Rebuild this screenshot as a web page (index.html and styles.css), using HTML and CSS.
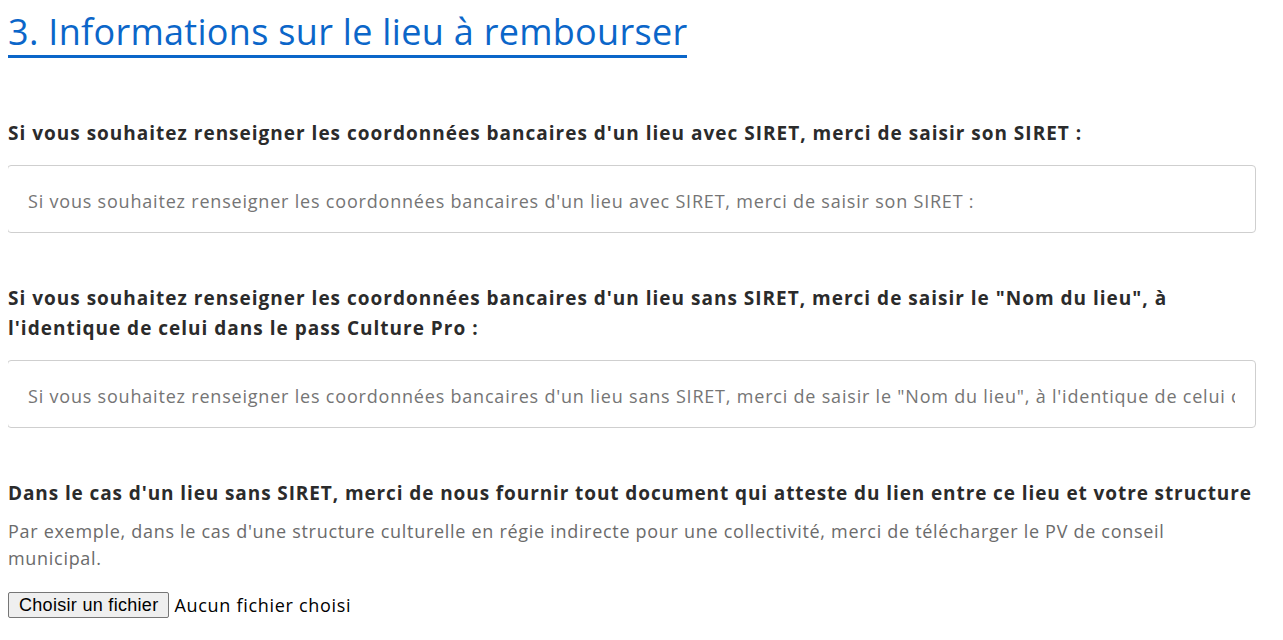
FILE: index.html
```html
<!DOCTYPE html>
<html lang="fr">
<head>
    <meta charset="utf-8">
    <link rel="stylesheet" href="styles.css">
</head>
<body>
    <div class="venue-form">
        <h1 class="venue-title">3. Informations sur le lieu à rembourser</h1>

        <div class="venue-field">
            <label class="venue-label" for="siret">Si vous souhaitez renseigner les coordonnées bancaires d'un lieu avec SIRET, merci de saisir son SIRET :</label>
            <input class="venue-input" id="siret" type="text" placeholder="Si vous souhaitez renseigner les coordonnées bancaires d'un lieu avec SIRET, merci de saisir son SIRET :">
        </div>

        <div class="venue-field">
            <label class="venue-label" for="venueName">Si vous souhaitez renseigner les coordonnées bancaires d'un lieu sans SIRET, merci de saisir le "Nom du lieu", à l'identique de celui dans le pass Culture Pro :</label>
            <input class="venue-input" id="venueName" type="text" placeholder="Si vous souhaitez renseigner les coordonnées bancaires d'un lieu sans SIRET, merci de saisir le &quot;Nom du lieu&quot;, à l'identique de celui dans le pass Culture Pro :">
        </div>

        <div class="venue-field venue-upload">
            <p class="venue-label venue-label-single">Dans le cas d'un lieu sans SIRET, merci de nous fournir tout document qui atteste du lien entre ce lieu et votre structure</p>
            <p class="venue-help">Par exemple, dans le cas d'une structure culturelle en régie indirecte pour une collectivité, merci de télécharger le PV de conseil municipal.</p>
            <div class="file-row">
                <button type="button" class="file-button">Choisir un fichier</button>
                <span class="file-name">Aucun fichier choisi</span>
            </div>
        </div>
    </div>
</body>
</html>
```

FILE: styles.css
```css
* {
    box-sizing: border-box;
}

body {
    margin: 8px;
    font-family: "Open Sans", Arial, sans-serif;
    color: #2b2b2b;
    background: #fff;
}

.venue-form {
    width: 1249px;
    margin-left: -1px;
}

.venue-title {
    display: inline-block;
    margin: 4px 0 0 0;
    padding: 0 0 3px 1px;
    font-size: 36px;
    font-weight: 400;
    line-height: 40px;
    letter-spacing: 0.3px;
    color: #0b66c9;
    border-bottom: 3px solid #0b66c9;
}

.venue-field {
    margin-top: 60px;
}

.venue-field + .venue-field {
    margin-top: 50px;
}

.venue-label {
    display: block;
    margin: 0 0 17px 1px;
    font-size: 19px;
    font-weight: 700;
    line-height: 30px;
    letter-spacing: 1px;
}

.venue-label-single {
    white-space: nowrap;
    letter-spacing: 0.9px;
}

.venue-input {
    display: block;
    width: 100%;
    height: 68px;
    padding: 4px 20px 0;
    border: 1px solid #cfcfcf;
    border-radius: 4px;
    font-family: inherit;
    font-size: 18px;
    letter-spacing: 0.8px;
    color: #2b2b2b;
    background: #fff;
}

.venue-input::placeholder {
    color: #757575;
}

.venue-upload .venue-label {
    margin-bottom: 10px;
}

.venue-help {
    margin: 0 0 0 1px;
    font-size: 18px;
    line-height: 27px;
    letter-spacing: 0.7px;
    color: #6b6b6b;
}

.file-row {
    display: flex;
    align-items: center;
    gap: 5px;
    margin: 20px 0 0 1px;
}

.file-button {
    height: 26px;
    padding: 0 10px;
    font-family: Arial, "Liberation Sans", sans-serif;
    font-size: 18px;
    letter-spacing: 0.3px;
    color: #000;
    background: #efefef;
    border: 1px solid #767676;
    border-radius: 2px;
}

.file-name {
    font-size: 18px;
    letter-spacing: 0.7px;
    color: #000;
}
```
